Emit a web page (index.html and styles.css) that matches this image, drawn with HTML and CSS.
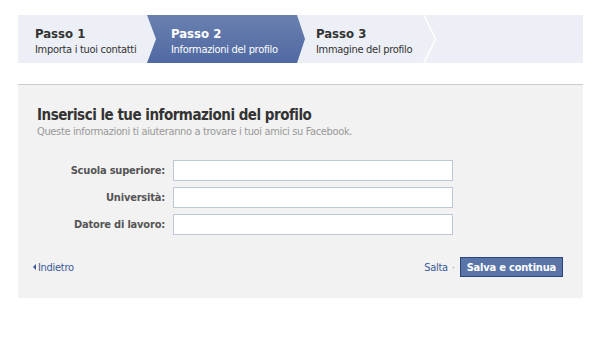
FILE: index.html
```html
<!DOCTYPE html>
<html lang="it">
<head>
    <meta charset="UTF-8">
    <title>Trova amici - Informazioni del profilo</title>
    <link rel="stylesheet" href="styles.css">
</head>
<body>
    <div class="page">
        <div class="steps">
            <div class="step step-first">
                <div class="step-title">Passo 1</div>
                <div class="step-desc">Importa i tuoi contatti</div>
            </div>
            <div class="step step-current">
                <div class="step-title">Passo 2</div>
                <div class="step-desc">Informazioni del profilo</div>
            </div>
            <div class="step step-last">
                <div class="step-title">Passo 3</div>
                <div class="step-desc">Immagine del profilo</div>
            </div>
            <svg class="step-sep" width="14" height="48" viewBox="0 0 14 48">
                <polyline points="1,0 12.5,24 1,48" fill="none" stroke="#ffffff" stroke-width="1.5"/>
            </svg>
        </div>

        <div class="panel">
            <h2>Inserisci le tue informazioni del profilo</h2>
            <p class="subtitle">Queste informazioni ti aiuteranno a trovare i tuoi amici su Facebook.</p>

            <form class="profile-form">
                <label for="school">Scuola superiore:</label>
                <input type="text" id="school">

                <label for="college">Università:</label>
                <input type="text" id="college">

                <label for="work">Datore di lavoro:</label>
                <input type="text" id="work">
            </form>

            <div class="footer">
                <a href="#" class="back"><span class="back-arrow"></span>Indietro</a>
                <div class="actions">
                    <a href="#" class="skip">Salta</a>
                    <span class="dot">&middot;</span>
                    <button type="button">Salva e continua</button>
                </div>
            </div>
        </div>
    </div>
</body>
</html>
```

FILE: styles.css
```css
body {
    margin: 0;
    background-color: #ffffff;
    font-family: 'DejaVu Sans Condensed', 'DejaVu Sans', sans-serif;
    font-size: 11px;
    letter-spacing: -0.3px;
    color: #333333;
}
.page {
    width: 565px;
    padding: 15px 0 0 18px;
}
.steps {
    display: flex;
    height: 48px;
    background-color: #eceff5;
}
.step {
    box-sizing: border-box;
    height: 48px;
    padding-top: 10px;
}
.step-first {
    width: 129px;
    padding-left: 17px;
}
.step-current {
    width: 158px;
    padding-left: 24px;
    color: #ffffff;
    background: linear-gradient(#6a80b0, #5069a2);
    clip-path: polygon(0 0, 150px 0, 158px 24px, 150px 48px, 0 48px, 9px 24px);
}
.step-last {
    width: 118px;
    padding-left: 11px;
}
.step-sep {
    display: block;
}
.step-title {
    font-weight: bold;
    font-size: 13px;
    line-height: 17px;
    letter-spacing: 0;
}
.step-desc {
    line-height: 15px;
}
.panel {
    margin-top: 21px;
    border-top: 1px solid #cccccc;
    background-color: #f2f2f2;
    padding: 21px 20px 21px 19px;
}
h2 {
    margin: 0;
    font-size: 15px;
    line-height: 19px;
    letter-spacing: -0.5px;
    color: #333333;
}
.subtitle {
    margin: 0;
    color: #999999;
    line-height: 14px;
    letter-spacing: -0.35px;
}
.profile-form {
    display: grid;
    grid-template-columns: 128px 280px;
    column-gap: 8px;
    row-gap: 6px;
    margin-top: 21px;
    align-items: center;
}
label {
    text-align: right;
    font-weight: bold;
    color: #555555;
    letter-spacing: -0.2px;
}
input {
    box-sizing: border-box;
    height: 21px;
    border: 1px solid #bdc7d8;
    background-color: #ffffff;
    padding: 3px;
    font-family: inherit;
    font-size: 11px;
}
.footer {
    display: flex;
    justify-content: space-between;
    align-items: center;
    margin-top: 22px;
}
.back {
    color: #3b5998;
    text-decoration: none;
    display: flex;
    align-items: center;
    margin-left: -4px;
}
.back-arrow {
    display: inline-block;
    width: 0;
    height: 0;
    border-top: 3px solid transparent;
    border-bottom: 3px solid transparent;
    border-right: 3px solid #3b5998;
    margin-right: 2px;
}
.actions {
    display: flex;
    align-items: center;
}
.skip {
    color: #3b5998;
    text-decoration: none;
}
.dot {
    color: #999999;
    margin: 0 5px 0 4px;
}
button {
    height: 20px;
    padding: 0 6px;
    border: 1px solid #29447e;
    background-color: #5b74a8;
    color: #ffffff;
    font-family: inherit;
    font-size: 11px;
    font-weight: bold;
    letter-spacing: -0.2px;
}
```
